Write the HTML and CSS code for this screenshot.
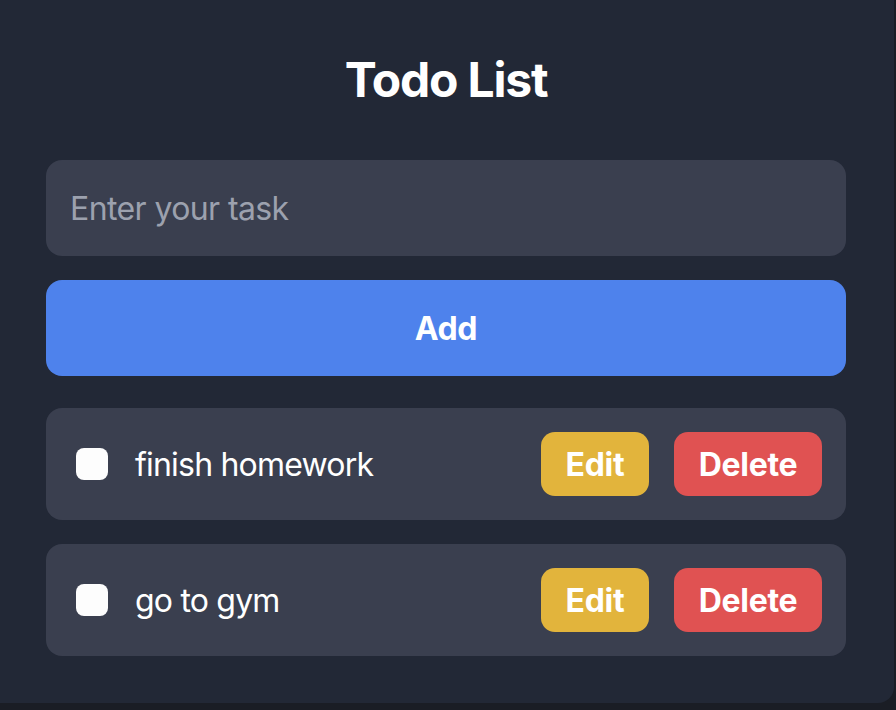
FILE: index.html
```html
<!DOCTYPE html>
<html lang="en">
<head>
<meta charset="utf-8">
<title>Todo List</title>
<link rel="stylesheet" href="styles.css">
</head>
<body>
<div class="card">
  <h1 class="title">Todo List</h1>
  <input class="task-input" type="text" placeholder="Enter your task">
  <button class="add-btn">Add</button>
  <ul class="list">
    <li class="item">
      <input class="check" type="checkbox">
      <span class="label">finish homework</span>
      <button class="btn edit">Edit</button>
      <button class="btn delete">Delete</button>
    </li>
    <li class="item">
      <input class="check" type="checkbox">
      <span class="label">go to gym</span>
      <button class="btn edit">Edit</button>
      <button class="btn delete">Delete</button>
    </li>
  </ul>
</div>
</body>
</html>
```
FILE: styles.css
```css
html, body {
  margin: 0;
  padding: 0;
  background: #1a1d25;
  height: 100%;
}
body {
  font-family: Inter, "Noto Sans", "Liberation Sans", sans-serif;
  color: #ffffff;
}
.card {
  box-sizing: border-box;
  width: 894px;
  height: 703px;
  background: #222836;
  border-radius: 0 0 16px 0;
  padding: 48px 48px 47px 46px;
  display: flex;
  flex-direction: column;
}
.title {
  margin: 0 0 48px;
  font-size: 48px;
  line-height: 64px;
  font-weight: 700;
  text-align: center;
  letter-spacing: -1.2px;
}
.task-input {
  box-sizing: border-box;
  width: 100%;
  height: 96px;
  border: none;
  outline: none;
  border-radius: 16px;
  background: #3a3f4f;
  padding: 0 24px;
  font-family: inherit;
  font-size: 32px;
  letter-spacing: -0.6px;
  color: #fff;
}
.task-input::placeholder {
  color: #9ca1ae;
  letter-spacing: -0.6px;
}
.add-btn {
  margin-top: 24px;
  height: 96px;
  width: 100%;
  border: none;
  border-radius: 16px;
  background: #4e82ec;
  color: #fff;
  font-family: inherit;
  font-size: 32px;
  font-weight: 700;
  letter-spacing: -0.4px;
}
.list {
  list-style: none;
  margin: 32px 0 0;
  padding: 0;
  display: flex;
  flex-direction: column;
  gap: 24px;
}
.item {
  box-sizing: border-box;
  height: 112px;
  background: #3a3f4f;
  border-radius: 16px;
  padding: 0 24px 0 30px;
  display: flex;
  align-items: center;
}
.check {
  appearance: none;
  -webkit-appearance: none;
  margin: 0 27px 0 0;
  width: 32px;
  height: 32px;
  border-radius: 8px;
  background: #fdfdfd;
  flex: none;
}
.label {
  flex: 1;
  font-size: 32px;
  color: #fff;
  letter-spacing: -0.8px;
}
.btn {
  height: 64px;
  border: none;
  border-radius: 14px;
  color: #fff;
  font-family: inherit;
  font-size: 32px;
  font-weight: 700;
  letter-spacing: -0.3px;
  padding: 0;
}
.edit {
  background: #e2b43c;
  width: 108px;
}
.delete {
  margin-left: 25px;
  background: #e05252;
  width: 148px;
}
```
